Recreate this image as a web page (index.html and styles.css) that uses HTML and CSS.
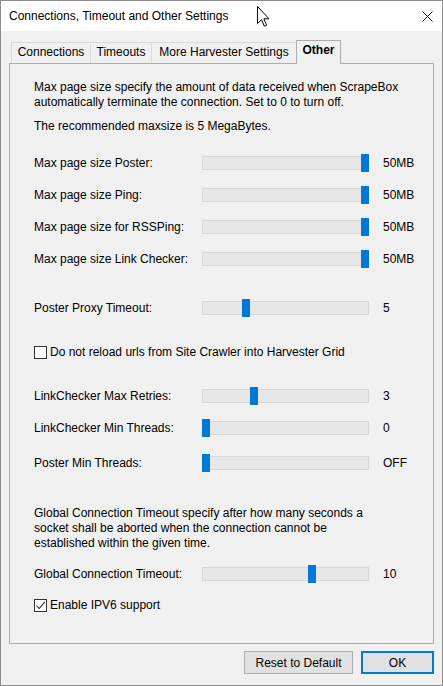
FILE: index.html
```html
<!DOCTYPE html>
<html>
<head>
<meta charset="utf-8">
<link rel="stylesheet" href="styles.css">
</head>
<body>
<div class="window">
  <div class="titlebar">
    <span class="title">Connections, Timeout and Other Settings</span>
    <svg class="close" width="11" height="11" viewBox="0 0 11 11"><path d="M0.5 0.5 L10.5 10.5 M10.5 0.5 L0.5 10.5" stroke="#111" stroke-width="1"/></svg>
  </div>
  <div class="client">
    <div class="tabs">
      <div class="tab t-conn">Connections</div>
      <div class="tab t-time">Timeouts</div>
      <div class="tab t-more">More Harvester Settings</div>
      <div class="tab active t-other">Other</div>
    </div>
    <div class="panel">
      <p class="para p-max">Max page size specify the amount of data received when ScrapeBox automatically terminate the connection. Set to 0 to turn off.</p>
      <p class="para rec">The recommended maxsize is 5 MegaBytes.</p>

      <div class="group g-max">
        <div class="row"><span class="label">Max page size Poster:</span><span class="track"><span class="thumb" style="left:159px"></span></span><span class="value">50MB</span></div>
        <div class="row"><span class="label">Max page size Ping:</span><span class="track"><span class="thumb" style="left:159px"></span></span><span class="value">50MB</span></div>
        <div class="row"><span class="label">Max page size for RSSPing:</span><span class="track"><span class="thumb" style="left:159px"></span></span><span class="value">50MB</span></div>
        <div class="row"><span class="label">Max page size Link Checker:</span><span class="track"><span class="thumb" style="left:159px"></span></span><span class="value">50MB</span></div>
      </div>

      <div class="row r-proxy"><span class="label">Poster Proxy Timeout:</span><span class="track"><span class="thumb" style="left:40px"></span></span><span class="value">5</span></div>

      <label class="check r-reload"><span class="box"></span><span>Do not reload urls from Site Crawler into Harvester Grid</span></label>

      <div class="group g-lc">
        <div class="row"><span class="label">LinkChecker Max Retries:</span><span class="track"><span class="thumb" style="left:48px"></span></span><span class="value">3</span></div>
        <div class="row"><span class="label">LinkChecker Min Threads:</span><span class="track"><span class="thumb" style="left:0px"></span></span><span class="value">0</span></div>
      </div>
      <div class="row r-pmt"><span class="label">Poster Min Threads:</span><span class="track"><span class="thumb" style="left:0px"></span></span><span class="value">OFF</span></div>

      <p class="para global">Global Connection Timeout specify after how many seconds a socket shall be aborted when the connection cannot be established within the given time.</p>

      <div class="row r-gct"><span class="label">Global Connection Timeout:</span><span class="track"><span class="thumb" style="left:106px"></span></span><span class="value">10</span></div>

      <label class="check r-ipv6"><span class="box"><svg width="11" height="11" viewBox="0 0 11 11"><path d="M1.5 5.5 L4.2 8.5 L9.8 1.8" fill="none" stroke="#222" stroke-width="1.1"/></svg></span><span>Enable IPV6 support</span></label>
    </div>
    <div class="buttons">
      <button class="btn reset">Reset to Default</button>
      <button class="btn ok">OK</button>
    </div>
  </div>
  <svg class="cursor" width="14" height="22" viewBox="0 0 14 22"><path d="M0.5 0.5 L0.5 17.5 L4.5 13.7 L7.3 20.2 L9.6 19.2 L6.9 12.8 L12 12.8 Z" fill="#fff" stroke="#000" stroke-width="1" stroke-linejoin="miter"/></svg>
</div>
</body>
</html>
```

FILE: styles.css
```css
html, body {
  margin: 0;
  padding: 0;
  background: #f0f0f0;
}
body {
  font-family: "Liberation Sans", Arial, sans-serif;
  font-size: 12px;
  color: #000;
}
.window {
  position: relative;
  width: 443px;
  height: 686px;
  box-sizing: border-box;
  border: 1px solid #8c8c8c;
  background: #f0f0f0;
  display: flex;
  flex-direction: column;
  overflow: hidden;
}
.titlebar {
  height: 30px;
  flex: none;
  background: #fff;
  display: flex;
  align-items: center;
  padding: 0 9px 0 8px;
}
.title {
  font-size: 12px;
  color: #000;
}
.close {
  margin-left: auto;
  display: block;
}
.client {
  flex: 1;
  padding: 9px 8px 0 8px;
  display: flex;
  flex-direction: column;
}
.tabs {
  height: 23px;
  display: flex;
  align-items: flex-end;
  padding-left: 2px;
}
.tab {
  box-sizing: border-box;
  height: 21px;
  border: 1px solid #d9d9d9;
  border-bottom: none;
  background: #f0f0f0;
  text-align: center;
  line-height: 19px;
  white-space: nowrap;
}
.t-conn { width: 80px; }
.t-time { width: 62px; margin-left: -1px; }
.t-more { width: 146px; margin-left: -1px; }
.t-other { width: 45px; margin-left: -1px; }
.tab.active {
  position: relative;
  z-index: 1;
  height: 24px;
  margin-bottom: -1px;
  border-color: #adadad;
  font-weight: bold;
  line-height: 19px;
}
.panel {
  width: 425px;
  height: 581px;
  box-sizing: border-box;
  border: 1px solid #adadad;
  background: #f0f0f0;
  padding: 16px 0 0 24px;
}
.para {
  margin: 0;
  line-height: 15px;
}
.p-max { width: 376px; }
.rec { margin-top: 9px; }
.group {
  display: flex;
  flex-direction: column;
  gap: 14px;
}
.g-max { margin-top: 20px; }
.row {
  display: flex;
  align-items: center;
  height: 18px;
}
.label {
  width: 168px;
  flex: none;
}
.track {
  position: relative;
  flex: none;
  width: 167px;
  height: 14px;
  box-sizing: border-box;
  background: #e7e7ea;
  border: 1px solid #d6d6d6;
}
.thumb {
  position: absolute;
  top: -3px;
  width: 8px;
  height: 18px;
  margin-left: -1px;
  background: #0078d7;
}
.value {
  margin-left: 14px;
}
.r-proxy { margin-top: 31px; }
.check {
  display: flex;
  align-items: center;
  height: 18px;
}
.box {
  box-sizing: border-box;
  width: 13px;
  height: 13px;
  border: 1px solid #333;
  background: #fff;
  margin-right: 3px;
  display: flex;
  align-items: center;
  justify-content: center;
}
.box svg { display: block; }
.r-reload { margin-top: 26px; }
.g-lc { margin-top: 26px; }
.r-pmt { margin-top: 17px; }
.global { margin-top: 34px; width: 350px; }
.r-gct { margin-top: 14px; }
.r-ipv6 { margin-top: 13px; }
.buttons {
  display: flex;
  justify-content: flex-end;
  gap: 8px;
  margin-top: 7px;
}
.btn {
  box-sizing: border-box;
  height: 23px;
  font-family: "Liberation Sans", Arial, sans-serif;
  font-size: 12px;
  color: #000;
  background: #e1e1e1;
  border: 1px solid #adadad;
  padding: 0;
  margin: 0;
}
.reset { width: 109px; }
.ok {
  width: 73px;
  border: 2px solid #0078d7;
}
.cursor {
  position: absolute;
  left: 256px;
  top: 5px;
}
```
